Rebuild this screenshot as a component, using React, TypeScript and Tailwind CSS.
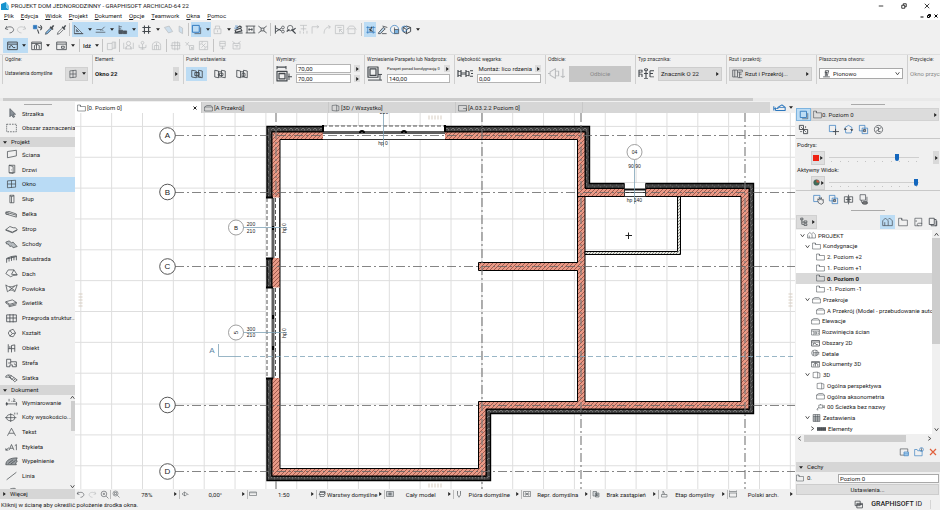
import React from "react";

const icons: Record<string, React.ReactNode> = {
  undo: <path d="M4 3 2 7l4 1M2 7c3-4 11-4 12 1 0 3-3 5-6 5" />,
  redo: <path d="m12 3 2 4-4 1M14 7C11 3 3 3 2 8c0 3 3 5 6 5" />,
  pick: <><path fill="#2f78bd" stroke="#2f78bd" d="M2 2h5v5H2z" /><path d="m8 8 2 6M12 2c3 2 3 5 0 7M9 4l4 2" strokeWidth="1.5" /></>,
  pipette: <><path strokeWidth="2.4" d="m9 4 4 4M11 6l3-4" /><path fill="#7cb3e0" d="M9 6 3 12l-1 3 3-1 6-6z" /></>,
  syringe: <><path strokeWidth="2.2" d="m9 4 4 4M11 6l3-4" /><path d="m9 6-6 6-1 3 3-1 6-6" /></>,
  triangle: <path d="M2 2v12h12zM5 8v3h3zM2 14h13" />,
  guide: <path d="M1 12h14M2 8h7M8 10l6-6M10 8l2 2" />,
  snap: <><path d="M3 2v12M3 4h4M3 7h3" /><path fill="#4a5661" d="M3 9h5v5H3zM9 10h5v4H9z" /></>,
  hash: <path strokeWidth="1.6" d="M5 2v12M11 2v12M2 5h12M2 11h12" />,
  plane: <path fill="#9cc6ea" d="M2 5 9 3l5 8-6 2z" />,
  planev: <path fill="#9cc6ea" d="M6 3l5 3v8l-5-3z" />,
  square: <><path stroke="#2f78bd" strokeWidth="1.4" d="M2 2h10v10H2z" /><path d="M5 14h9V5" /></>,
  lock: <path d="M3 7h10v7H3zM5 7V3h6v4M8 9v3" />,
  trace: <><path strokeWidth="1.6" d="M2 13h12M3 9l8-3 2 4-9 2zM5 6l5-3 3 2" /><path stroke="#2f78bd" d="M3 3h4M2 6h5" /></>,
  dim: <path strokeWidth="1.2" d="M1 3h14M1 13h14M3 3v10M13 3v10M6 6v4M10 6v4M5 8h6" />,
  cross: <path strokeWidth="1.2" d="m2 3 4 3M14 3l-4 3M2 13l4-3M14 13l-4-3M6 6h4v4H6z" />,
  scissors: <><circle cx="13" cy="5" r="2" /><circle cx="13" cy="11" r="2" /><path strokeWidth="1.4" d="M2 2v12M11 6 3 11M11 10 3 6" /></>,
  key: <><circle cx="6" cy="6" r="4" /><path strokeWidth="1.8" d="m8 8 6 6M10 9l4-3M1 11l4-3" /></>,
  split: <path d="M3 2h10M8 2v8M4 7h8M3 14v-4M8 14v-3M13 14v-4" />,
  corner: <path d="M3 14V4h9M10 2l3 2-3 2" />,
  curve: <path d="M3 14C3 7 7 4 12 4M9 2l3 2-2 3" />,
  resize: <path d="M2 2h12v12H2zM5 5h6M8 8l5 5M8 12V8h4" />,
  door: <path d="M3 7h10v7H3zM1 8l4-5h6l4 5" />,
  marquee: <><path stroke="#2f78bd" d="M4 3v11M12 3v11M2 5h13M2 12h13" /><path strokeWidth="1.6" d="m6 7 5 4M10 4l-3 7" /></>,
  pencil: <path strokeWidth="1.2" fill="#b9d2e6" d="m2 13 7-8 3 2-7 7H2zM8 3l7 2M7 14h7" />,
  globe: <><circle cx="8" cy="8" r="6" stroke="#2f78bd" /><path fill="#7cb3e0" d="M8 8h6v6H8z" /><path d="M8 5v4" /></>,
  cube: <><path strokeWidth="1.4" d="m8 3 6 2v6l-6 3-5-3V5zM3 5l5 3 6-3M8 8v6" /><circle cx="5" cy="7" r="4" stroke="#2f78bd" /></>,
  planwin: <path strokeWidth="1.4" d="M1 3h14v11H1zM1 6h14M4 12V9l3-1 2 3h3" />,
  cubewin: <path strokeWidth="1.2" d="M1 3h14v11H1zM1 5h14M5 13V8l3-2 4 2v5M8 6v7" />,
  sheetwin: <path strokeWidth="1.2" d="M1 3h14v11H1zM1 6h14M8 9h4v3H8z" />,
  copy: <path d="M2 5h7v9H2zM9 5V3h5v9H9M12 3v9" />,
  people: <><circle cx="8" cy="5" r="3" /><path d="M3 13c0-6 10-6 10 0zM1 4v9M15 4v9M5 10v3M11 10v3" /></>,
  person: <><circle cx="8" cy="4" r="2" /><path d="M8 6v8M3 7v4h10V7M5 13h6" /></>,
  arch: <path d="M2 14V8c0-7 12-7 12 0v6H2M5 14V8h6v6M8 4v10" />,
  grid: <path d="M3 4h11v9H3zM7 2v13M11 2v13M1 8h14" />,
  percent: <path d="m2 3 6 6M3 8l4-5M8 8h6v6H8zM10 10l3 3M13 10l-3 3" />,
  cage: <path d="M2 2h12v12H2zM5 5l6 6M11 5l-6 6M2 6h3M11 10h3M6 2v3M10 11v3" />,
  stamp: <path d="M4 2h8v7H4zM4 5h8M8 9v5M5 12h6" />,
  camera: <path d="M3 5h10v8H3zM2 2l4 3M14 2l-4 3M5 8h6M7 10h3" />,
  window: <path d="M3 3 13 2v11L3 14zM8 2v12M3 8h10" />,
  anchorL: <path strokeWidth="1.1" d="M1 3l6 1v9l-6-1zM7 6h3M7 12h6M10 3l5 1v9l-5-1zM5 6h6v4H5zM8 7v2" />,
  anchorC: <path strokeWidth="1.1" d="M1 3l5 1v9l-5-1zM6 5h4M6 12h4M10 3l5 1v9l-5-1zM7 7h5v3H7zM5 9h3" />,
  anchorR: <path strokeWidth="1.1" d="M1 3l5 1v9l-5-1zM6 5h4M6 12h4M10 3l5 1v9l-5-1zM8 7h4v4H8z" />,
  size: <><path strokeWidth="1.2" d="M1 6h10v9H1zM3 8h6v5H3z" /><path d="M1 1v3M10 1v3M1 2h9M13 8v6M12 11h4" /></>,
  sill: <><path strokeWidth="1.2" d="M1 1h10v11H1zM3 3h6v7H3z" /><path d="M1 15h14M13 9v6M11 9h4" /></>,
  reveal: <path strokeWidth="1.2" d="M1 3v10M4 3v10M1 5h3M1 11h3M4 7h5M4 9h5M9 3v10M12 5v7M9 5h3M9 11h3M13 4h3M14 8h2M13 12h3" />,
  flip: <path d="M0 8h2M2 6l5-4v12l-5-4zM7 5h3v6H7M14 2v11M12 11l2 2 2-2" />,
  marker: <path strokeWidth="1.1" d="M1 3h3v3H1zM1 13V6M1 9h3v4M8 4v11M6 8h4M6 15h4M8 1a1.5 1.5 0 1 0 .1 0M12 4h4M12 8h3M12 13h4M12 4v9" />,
  section: <path d="M1 3h7v10H1zM4 3v10M8 6h6M11 6v8M8 14h7M9 3h6v3M11 9h3" />,
  vertical: <path strokeWidth="1.4" d="M2 14h12M6 13V3h6l-3 10M8 5v7M5 6h5" />,
  folder: <path d="M1 2h5v3h9v9H1zM6 2v3" />,
  house: <path d="M1 14V7l4-4 4 4v7zM9 5l2-2 4 4v7H9M4 14V9" />,
  case: <path d="M1 6h14v8H1zM1 6l4-3h7l3 3" />,
  box3d: <path d="M2 3l8-1v12l-8-1zM10 3l4 1v9l-4 1" />,
  sheet: <path d="M1 3h14v11H1zM9 9h6v5" />,
  homeblue: <path stroke="#2f78bd" d="M1 12V5M3 12h12V7l-4-4-5 4h9M3 7v5M1 9h5V7" strokeWidth="1.3" />,
  arrow: <path fill="#8b9299" stroke="#50575e" d="M6 1v13l2-3 2 4 2-1-2-4h3z" />,
  area: <path strokeDasharray="2 1.3" d="M2 2h12v12H2z" />,
  wall: <path d="M3 4 14 2v9L3 14z" />,
  drzwi: <><path d="M5 2h7v12H5zM5 2l5 2v11l-5-1" /><path d="M8 9v1" /></>,
  column: <path d="M6 2h5v12H6zM6 3l2 1 3-1M8 4v10" />,
  beam: <path d="M1 5v3l13 5v-3zM1 5l4-1 9 4v2M1 8l4 0" />,
  slab: <path d="M1 9l5-5 4 2h3l2 3-6 4zM1 9v1l8 4 6-4" />,
  stairs: <path fill="#b7bcc0" d="M1 5l4-2 3 3 2-1 2 3 3 4-5 2-2-3-2 1-2-4H2z" />,
  rail: <path strokeWidth="1.1" d="M2 14V7l6-3 6-1v7M5 12V6M8 11V4M11 10V4M2 8l12-4" />,
  roof: <path d="M1 9l3-6h7l4 8-5 1-3 2zM11 3l-3 7 7 1" />,
  shell: <path d="M1 3c4 5 9 3 14 0l-3 11c-4-4-6-3-9 0zM5 6l7 6M12 5l-7 7" />,
  skylight: <path d="M1 6l8-3 5 4-8 3zM1 6v2l5 4 8-3V7M5 11v3l9-3" />,
  curtain: <path d="M2 3h12v11H2zM6 2v13M10 2v13M2 8h12" strokeWidth="1.1" />,
  morph: <path d="M6 4l4-2 3 6-3 6-4-1-2-5zM6 4l3 5-3 4M9 9l4-1" />,
  object: <path d="M4 2v7h4V4l4-1v11M4 9v6M8 9v6M8 9h4M6 5v4" strokeWidth="1.1" />,
  zone: <path strokeWidth="1.1" d="M2 2h5v4h7v8H9v-3H6v3H2zM7 6v3M11 9l3 3M4 8h3" />,
  mesh: <path d="M1 5c5-5 8 1 14 6l-3 3C8 9 5 5 1 7zM4 3l4 7M8 4l-2 4M11 7l-3 4M13 9l-3 3" />,
  dimline: <path d="M1 11h14M2 8v6M14 8v6M5 3v4M8 7h1M10 3c3 0 2 2 0 4h3M1 11l2-1v2z" />,
  level: <><circle cx="7" cy="9" r="5" /><path d="M7 2v14M0 9h14M12 1v3M15 1v3" /></>,
  text: <path d="M3 14 8 2l5 12M5 10h6" />,
  label: <path d="M1 13l4-4M1 10v3h3M5 13l3-9 3 9M6 10h4M12 6l2-2v9" />,
  fill: <path fill="#9a9fa3" d="M1 14c0-8 6-11 14-11l-1 3 1 3-2 2 1 3zM4 12l6-6M7 13l6-6" />,
  line: <path d="M2 14 14 2" />,
  arc: <path d="M3 13C3 5 8 3 13 4" />,
  zoom: <><circle cx="7" cy="7" r="5" /><path d="m11 11 4 4M5 7h4M7 5v4" /></>,
  zoomall: <><circle cx="7" cy="7" r="5" /><path d="m11 11 4 4M5 5h4v4H5z" /></>,
  rotate: <path d="M2 8l5-4 6 4-5 4zM7 4v8M13 8l2 2" />,
  ruler: <path d="M1 4h14v7H1zM4 4v3M8 4v3M12 4v3" />,
  layers: <path strokeWidth="1.3" d="M4 5h10L12 9H2zM4 9v4H12l2-4M4 5V3h10v6" />,
  model: <path fill="#c9cccf" d="M1 3h14v10H1zM4 6l8 4M4 10l8-4M8 3v10" />,
  pen: <path strokeWidth="1.3" d="M5 2v7c0 5 6 5 6 0V2M8 13v2" />,
  repr: <path d="M1 3h14v10H1zM4 5l8 6M12 5l-8 6M3 8h10" />,
  override: <path d="M2 3h7v9H2zM7 6h7v8H7zM9 8h3v3H9z" fill="#cfd3d6" />,
  phase: <path d="M3 14V9h3V2l4 7h4v5zM6 9h4" />,
  std: <path d="M1 6h14v8H1zM2 3h12M1 1v4M15 1v4" />,
  swap: <><path d="M2 2h6v6H2zM8 8h6v6H8z" strokeWidth="1.3" /><path d="M11 3v3M3 11h3M4 4l8 8" /></>,
  move: <><path stroke="#2f78bd" d="M2 2h9v9H2z" /><path strokeWidth="1.3" d="M11 7v9M7 11h9" /></>,
  spin: <><path stroke="#2f78bd" d="M3 5l5-3 5 3-1 8H4z" /><path fill="#444" d="m2 8 1-2 2 2zM11 8l2 2 1-2z" /></>,
  copies: <><path stroke="#2f78bd" d="M2 2h8v8H2zM6 6h8v8H6z" /><path fill="#99a5af" d="M8 8h3v3H8z" /></>,
  reset: <><circle cx="8" cy="8" r="6" /><path d="m4 11 8-6M5 5h3v3M11 11H8V9" strokeWidth="1.1" /></>,
  hand: <><path stroke="#2f78bd" d="M1 2h9v9H1z" /><path fill="#eee" d="M7 10V7l2 2V5l2 3 1-3 1 4 2-1v5l-3 2-4-2z" /></>,
  mirror: <path d="M2 4h5v8H2zM9 4h5v8H9zM8 1v14M4 8h8" strokeWidth="1.1" />,
  layer3: <><path d="M3 1h8v8H3zM5 9v3h8V4" /><ellipse cx="10" cy="13" rx="4" ry="2" fill="#777" /></>,
  treeicon: <path strokeWidth="1.3" d="M3 2h4v3H3zM5 5v8h4M5 9h4M9 7h5v3H9zM9 12h5v3H9z" />,
  page: <path d="M3 2h11v9M3 2v12h6M9 14c-3 0-3-4 0-4h5v4H9M5 8V5" />,
  pages: <path d="M2 2h8v10H2zM5 12v2h8V4h-3M12 14h2V6" strokeWidth="1.3" />,
  interior: <path d="M1 3h14v11H1zM1 6h14M5 6v8M7 8h3v4H7zM12 8h2M12 11h2" />,
  detail: <><circle cx="7" cy="8" r="6" /><path d="M4 3v10M9 2v12M4 7h11M4 10h11" /></>,
  cam: <path d="M5 4h7v6H5zM12 7l3-2v5l-3-2M1 13l4-4M3 11v4M8 4V2" />,
  table: <><path fill="#cfd2d4" d="M2 1h12v14H2z" /><path d="M2 5h12M2 8h12M2 12h12M6 1v14M10 1v14" /></>,
  elems: <path fill="#55595c" d="M0 5h16v6H0zM4 5v6M8 5v6M12 5v6" />,
  saveview: <><path d="M2 3h12v10H2z" /><path stroke="#2f78bd" fill="#bcdcf5" d="M8 8h7v6H8zM8 11h7" /></>,
  newfolder: <><path stroke="#2f78bd" d="M1 4h4l1 2h7v8H1z" /><circle cx="12" cy="4" r="3" stroke="#2f78bd" /><path d="M12 2v4" /></>,
  del: <path stroke="#e0603c" strokeWidth="2.4" d="m2 2 12 12M14 2 2 14" />,
  winstack: <path strokeWidth="1.4" d="M2 2h9v8H2zM5 6h10v8H5zM5 8h10" />,
  circle4: <><circle cx="8" cy="8" r="6.5" fill="#3f6f5a" /><path fill="#d8543a" stroke="none" d="M8 8V2a6 6 0 0 1 6 6z" /></>,
};

function Ico({ n, c = "size-[11px]", off = false }: { n: string; c?: string; off?: boolean }) {
  return (
    <svg viewBox="0 0 16 16" preserveAspectRatio="none" fill="none" strokeWidth="1" strokeLinejoin="round" className={`${c} shrink-0 ${off ? "stroke-[#6b7075] opacity-40" : "stroke-[#43484d]"}`} aria-hidden="true">
      {icons[n]}
    </svg>
  );
}

const Down = () => (
  <svg viewBox="0 0 6 4" className="h-[3px] w-1 shrink-0 fill-[#222]" aria-hidden="true"><path d="M0 0h6L3 4z" /></svg>
);
const Right = () => (
  <svg viewBox="0 0 4 6" className="h-1 w-[3px] shrink-0 fill-[#222]" aria-hidden="true"><path d="M0 0v6l4-3z" /></svg>
);
const Chev = ({ open = true }: { open?: boolean }) => (
  <svg viewBox="0 0 8 8" fill="none" className="size-[5px] shrink-0 stroke-[#333] stroke-[1.3]" aria-hidden="true"><path d={open ? "m1 2 3 4 3-4" : "m2 1 4 3-4 3"} /></svg>
);

function Tool({ n, off, menu, tight }: { n: string; off?: boolean; menu?: boolean; tight?: boolean }) {
  const width = tight ? "w-5 justify-between pr-px" : menu ? "w-[22px] justify-between pl-px pr-[2px]" : "w-3 justify-center";
  return (
    <button aria-label={n} className={`flex h-full shrink-0 items-center ${width}`}>
      <Ico n={n} off={off} />
      {(menu || tight) && <Down />}
    </button>
  );
}
const Sep = () => <span className="mx-[2px] h-[13px] w-px shrink-0 bg-[#c4c4c4]" />;

function Header() {
  return (
    <header className="shrink-0 bg-white">
      <div className="flex h-[11px] items-center justify-between pl-px pr-[10px]">
        <div className="flex items-center gap-[2px]">
          <svg viewBox="0 0 8 8" className="size-2" aria-hidden="true"><path fill="#1593cf" d="M0 8V2l5-2v5l3 3z" /><path fill="#76c7ea" d="M5 0v5l3 3V4z" /></svg>
          <h1 className="text-[6px]">PROJEKT DOM JEDNORODZINNY - GRAPHISOFT ARCHICAD-64 22</h1>
        </div>
        <div className="flex gap-[17px]">
          {["M1 4h6", "M1 3h4v4H1zM3 3V1h4v4H5", "m1 1 6 6M7 1 1 7"].map((d, i) => (
            <button key={d} aria-label={["Minimalizuj", "Przywróć", "Zamknij"][i]}><svg viewBox="0 0 8 8" fill="none" className="size-[6px] stroke-black"><path d={d} /></svg></button>
          ))}
        </div>
      </div>
      <nav className="flex h-[9px] items-center gap-[7px] pl-1 pr-[2px] text-[6px]">
        {["Plik", "Edycja", "Widok", "Projekt", "Dokument", "Opcje", "Teamwork", "Okna", "Pomoc"].map((m) => (
          <button key={m} className="leading-[9px]"><span className="underline">{m[0]}</span>{m.slice(1)}</button>
        ))}
        <span className="grow" />
        <div className="flex gap-[3px]">
          {["M1 6h6", "M1 3h4v4H1zM3 3V1h4v4H5", "m1 1 6 6M7 1 1 7"].map((d, i) => (
            <button key={d} aria-label={["Minimalizuj okno", "Przywróć okno", "Zamknij okno"][i]}><svg viewBox="0 0 8 8" fill="none" className="size-1 stroke-black stroke-2"><path d={d} /></svg></button>
          ))}
        </div>
      </nav>
    </header>
  );
}

function Toolbars() {
  return (
    <div className="shrink-0 bg-[#f0f0f0]">
      <div className="flex h-[18px] items-center px-[3px] py-px">
        <Tool n="undo" /><Tool n="redo" off /><span className="w-1" />
        <Tool n="pick" /><Tool n="pipette" /><Tool n="syringe" /><Sep />
        <div className="flex h-[15px] bg-[#bcdcf4]"><Tool n="triangle" menu /><Tool n="guide" menu /><Tool n="snap" menu /></div>
        <span className="w-[2px]" /><Tool n="hash" menu /><Tool n="plane" off /><Tool n="planev" off /><Sep />
        <div className="flex h-[15px] bg-[#bcdcf4]"><Tool n="square" tight /></div>
        <span className="w-px" /><Tool n="lock" off tight /><Tool n="trace" /><Tool n="dim" /><Tool n="cross" /><Sep />
        <Tool n="scissors" /><Tool n="key" /><Tool n="split" off /><Tool n="corner" off /><Tool n="curve" off /><Tool n="resize" off /><Tool n="door" off /><span className="w-[2px]" /><Sep />
        <div className="flex h-[15px] bg-[#bcdcf4]"><Tool n="marquee" /></div>
        <Tool n="pencil" /><Tool n="globe" /><Tool n="cube" menu />
      </div>
      <div className="flex h-4 items-center px-[3px] pb-px">
        <div className="mr-[2px] flex h-full bg-[#bcdcf4] pl-[3px]"><Tool n="planwin" menu /></div>
        <Tool n="cubewin" menu /><span className="w-[3px]" /><Tool n="sheetwin" menu /><Sep />
        <button className="flex h-full items-center gap-1 px-px text-[6px] font-medium">Idź<Down /></button><Sep />
        <Tool n="copy" off /><Sep />
        <Tool n="people" off /><span className="w-[2px]" /><Tool n="person" off /><span className="w-[2px]" /><Tool n="arch" off /><span className="w-[2px]" /><Sep />
        <Tool n="grid" off /><span className="w-[2px]" /><Tool n="percent" off /><span className="w-[2px]" /><Tool n="cage" off /><span className="w-[2px]" /><Sep />
        <Tool n="stamp" off /><span className="w-[2px]" /><Tool n="camera" off />
      </div>
    </div>
  );
}

function Panel({ title, children }: { title: string; children: React.ReactNode }) {
  return (
    <section className="h-[29px] w-[90px] shrink-0 border-l border-[#cfcfcf] pl-[2px] pr-1 even:w-[91px]">
      <h2 className="h-2 whitespace-nowrap text-[5px] leading-[8px] text-[#333]">{title}</h2>
      <div className="flex h-[21px] items-center gap-1">{children}</div>
    </section>
  );
}
const Step = () => <button aria-label="Więcej opcji" className="flex h-[7px] w-[6px] shrink-0 items-center justify-center bg-[#dcdcdc]"><Right /></button>;
const field = "h-[9px] min-w-0 grow border border-[#b4b4b4] bg-white px-px text-[6px] leading-[8px]";

function InfoBox() {
  return (
    <div className="h-12 shrink-0 overflow-hidden border-t border-[#dedede] bg-[#f0f0f0]">
      <div className="flex pl-[2px]">
        <Panel title="Ogólne:">
          <span className="w-0 grow whitespace-nowrap text-[5px]">Ustawienia domyślne</span>
          <button aria-label="Typ okna" className="flex h-[14px] w-[23px] items-center justify-center gap-1 border border-[#d0d0d0] bg-[#dcdcdc]"><Ico n="window" c="size-[10px]" /><Down /></button>
        </Panel>
        <Panel title="Element:">
          <b className="grow text-[6px]">Okno 22</b>
          <button aria-label="Wybierz element" className="flex h-[14px] w-[6px] items-center justify-center bg-[#d8d8d8]"><Right /></button>
        </Panel>
        <Panel title="Punkt wstawienia:">
          <button aria-label="Krawędź 1" className="flex h-[14px] w-[21px] items-center justify-center bg-[#bcdcf4]"><Ico n="anchorL" c="size-3" /></button>
          <button aria-label="Środek" className="w-[18px]"><Ico n="anchorC" c="mx-auto size-3" /></button>
          <button aria-label="Krawędź 2" className="w-[18px]"><Ico n="anchorR" c="mx-auto size-3" /></button>
        </Panel>
        <Panel title="Wymiary:">
          <Ico n="size" c="w-4 h-[17px]" />
          <div className="flex min-w-0 grow flex-col gap-px">
            <div className="flex items-center gap-[3px]"><input aria-label="Szerokość" defaultValue="70,00" className={field} /><Step /></div>
            <div className="flex items-center gap-[3px]"><input aria-label="Wysokość" defaultValue="70,00" className={field} /><Step /></div>
          </div>
        </Panel>
        <Panel title="Wzniesienie Parapetu lub Nadproża:">
          <Ico n="sill" c="w-4 h-[15px]" />
          <div className="flex min-w-0 grow flex-col gap-px">
            <div className="flex items-center justify-between whitespace-nowrap text-[4px] leading-[9px]"><label htmlFor="sill">Parapet ponad kondygnację 0</label><Step /></div>
            <input id="sill" defaultValue="140,00" className={field + " shrink-0"} />
          </div>
        </Panel>
        <Panel title="Głębokość węgarka:">
          <Ico n="reveal" c="w-4 h-[11px]" />
          <div className="flex min-w-0 grow flex-col gap-px">
            <div className="flex items-center justify-end gap-[3px] whitespace-nowrap text-[6px] leading-[9px]"><label htmlFor="reveal">Montaż: lico rdzenia</label><Step /></div>
            <input id="reveal" defaultValue="0,00" className={field + " shrink-0"} />
          </div>
        </Panel>
        <Panel title="Odbicie:">
          <Ico n="flip" c="w-[17px] h-[13px]" off />
          <button disabled className="h-4 grow bg-[#c6c6c6] text-[6px] text-[#8a8a8a]">Odbicie</button>
        </Panel>
        <Panel title="Typ znacznika:">
          <Ico n="marker" c="w-[16px] h-[11px]" />
          <button className="flex h-[14px] grow items-center justify-between border border-[#cdcdcd] bg-[#dcdcdc] px-[2px] text-[6px]">Znacznik O 22<Right /></button>
        </Panel>
        <Panel title="Rzut i przekrój:">
          <button className="flex h-[14px] grow items-center gap-[2px] border border-[#cdcdcd] bg-[#dcdcdc] px-[2px] text-[6px]"><Ico n="section" /><span className="grow text-left">Rzut i Przekrój...</span><Right /></button>
        </Panel>
        <Panel title="Płaszczyzna otworu:">
          <div className="flex h-[11px] grow items-center border border-[#a9a9a9] bg-white px-[2px]">
            <Ico n="vertical" c="size-[9px]" />
            <select aria-label="Płaszczyzna otworu" className="grow appearance-none bg-transparent pl-[2px] text-[6px] leading-[8px]"><option>Pionowo</option></select>
            <Chev />
          </div>
        </Panel>
        <Panel title="Przycięcie:"><span className="whitespace-nowrap text-[6px] text-[#888]">Okno przycięte</span></Panel>
      </div>
      <div className="mt-[14px] h-[3px] bg-[#e9e9e9] pl-[3px]"><div className="h-full w-4/5 bg-[#cbcbcb]" /></div>
    </div>
  );
}

const projectTools = [["wall", "Ściana"], ["drzwi", "Drzwi"], ["window", "Okno"], ["column", "Słup"], ["beam", "Belka"], ["slab", "Strop"], ["stairs", "Schody"], ["rail", "Balustrada"], ["roof", "Dach"], ["shell", "Powłoka"], ["skylight", "Świetlik"], ["curtain", "Przegroda struktur..."], ["morph", "Kształt"], ["object", "Obiekt"], ["zone", "Strefa"], ["mesh", "Siatka"]];
const docTools = [["dimline", "Wymiarowanie"], ["level", "Koty wysokościo..."], ["text", "Tekst"], ["label", "Etykieta"], ["fill", "Wypełnienie"], ["line", "Linia"], ["arc", ""]];

const ToolRow = ({ n, t }: { n: string; t: string }) => (
  <button aria-label={t || n} className={`flex min-h-0 w-full flex-1 items-center gap-1 whitespace-nowrap pl-[5px] text-left text-[6px] ${t === "Okno" ? "bg-[#b9dbf5]" : ""}`}>
    <Ico n={n} c="w-[13px] h-[10px]" />{t}
  </button>
);
const Bar = ({ t, closed }: { t: string; closed?: boolean }) => (
  <h3 className="flex h-[10px] shrink-0 items-center gap-1 bg-[#d6d6d6] pl-[3px] text-[6px]">{closed ? <Right /> : <Down />}{t}</h3>
);

function Toolbox() {
  return (
    <aside className="flex w-[75px] shrink-0 flex-col bg-[#f0f0f0]">
      <div className="mx-auto mt-[2px] h-px w-7 shrink-0 bg-[#aaa]" />
      <div className="mt-px mb-[2px] flex h-[29px] shrink-0 flex-col"><ToolRow n="arrow" t="Strzałka" /><ToolRow n="area" t="Obszar zaznaczenia" /></div>
      <Bar t="Projekt" />
      <div className="flex min-h-0 flex-1 flex-col">{projectTools.map(([n, t]) => <ToolRow key={n} n={n} t={t} />)}</div>
      <Bar t="Dokument" />
      <div className="flex h-[94px] shrink-0 overflow-hidden">
        <div className="flex h-[103px] min-w-0 grow flex-col">{docTools.map(([n, t]) => <ToolRow key={n} n={n} t={t} />)}</div>
        <div className="flex w-[5px] flex-col items-center"><span className="rotate-180"><Chev /></span><div className="mt-px h-[30px] w-1 bg-[#cdcdcd]" /><span className="grow" /><Chev /></div>
      </div>
      <Bar t="Więcej" closed />
    </aside>
  );
}

const steps = (start: number, end: number) => {
  const out: number[] = [];
  for (let v = start; v < end; v += 30.85) out.push(v);
  return out;
};
const mid = "M272 132H585V188.5H749V409H486V476H272Z";

function Plan() {
  return (
    <svg viewBox="75 113 720 376" preserveAspectRatio="xMidYMid slice" className="block size-full bg-white" fontFamily="Liberation Sans, Arial, sans-serif" role="img" aria-label="Rzut parteru">
      <defs>
        <pattern id="brick" width="4" height="4" patternUnits="userSpaceOnUse"><rect width="4" height="4" fill="#e99a87" /><path d="M-1 5 5-1M-1 1l2-2M3 5l2-2" stroke="#8e4a3e" strokeWidth=".8" /></pattern>
        <pattern id="insul" width="6" height="6" patternUnits="userSpaceOnUse"><rect width="6" height="6" fill="#444" /><path d="M1 4l2-2 2 2M0 1h1M4 5h1" stroke="#8c8c8c" strokeWidth=".7" fill="none" /></pattern>
        <pattern id="light" width="3" height="3" patternUnits="userSpaceOnUse"><rect width="3" height="3" fill="#e4e6df" /><path d="M0 3 3 0" stroke="#444" strokeWidth=".6" /></pattern>
      </defs>
      <g stroke="#dedede" strokeWidth="1">
        {steps(80.8, 795).map((x) => <path key={x} d={`M${x} 113V489`} />)}
        {steps(126.4, 489).map((y) => <path key={y} d={`M75 ${y}H795`} />)}
      </g>
      <g stroke="#000" strokeWidth="1">
        <path fill="url(#insul)" fillRule="evenodd" d={`M267 126.5H589.5V183.5H753.5V413.5H490.5V480.5H267Z ${mid}`} strokeWidth="1.4" />
        <path fill="url(#brick)" fillRule="evenodd" d={`${mid} M280 139.5H577.5V262.5H478.5V270.5H577.5V401.5H478.5V468.5H280Z M585 196.5H741V401.5H585Z`} />
        <path fill="url(#light)" d="M677.5 196.5H680.5V254.5H585V251.5H677.5Z" />
        <path d="M577.5 196.5H585" />
      </g>
      <path fill="#fff" d="M323 125.5H445V139H323ZM266 197.5H279.5V258H266ZM266 287.5H279.5V378H266ZM624.5 182.5H645.5V196H624.5Z" />
      <g stroke="#333" strokeWidth="1" fill="none">
        <path d="M323 126H445M267 198V258M267 288V378M275.5 198V258M275.5 288V378" strokeDasharray="4 2" stroke="#555" />
        <path d="M323 139.5H445M279.5 198V258M279.5 288V378" />
        <path d="M323 132.5H445M273 198V258M273 288V378" stroke="#5e5e5e" strokeWidth="3" />
        <path d="M624.5 183.5V196.5H645.5V183.5M624.5 192.5H645.5" />
        <path d="M624.5 189.5H645.5" stroke="#111" strokeWidth="2" />
        <path d="M323 125V132M445 125V132M266 197.5H273M266 258.5H273M266 287.5H273M266 378.5H273" stroke="#000" strokeWidth="2" />
        <path d="M360 133a2 2 0 0 1 4 0M402 133a2 2 0 0 1 4 0M273 226v4M273 315v4M273 346v4" stroke="#000" strokeWidth="2" />
      </g>
      <g stroke="#666" strokeWidth=".8" strokeDasharray="9 3 2 3" fill="none">
        {[135.5, 192.5, 266.5, 405.5, 471.5].map((y) => <path key={y} d={`M175 ${y}H795`} />)}
        <path d="M276 113V196M276 481V489M482 113V489M581 113V489M745 113V489" strokeWidth="1.1" stroke="#777" />
      </g>
      <g fill="#fff" stroke="#444" strokeWidth=".9">
        {[[135.5, "A"], [192, "B"], [266.5, "C"], [405, "D"], [471.5, "D"]].map(([y, t]) => (
          <g key={y}><circle cx="167.5" cy={y} r="7.8" /><text x="167.5" y={Number(y) + 2.6} fontSize="8" textAnchor="middle" fill="#222" stroke="none">{t}</text></g>
        ))}
      </g>
      <g stroke="#7fa3b8" strokeWidth=".8" fill="none">
        <path d="M383.5 113V147M243 227.5H287M243 332.5H287M634.5 160V204" />
        <path d="M218.5 344V356.5H236" /><path d="M236 356.5H795" strokeDasharray="5 3" />
      </g>
      <g fill="#fff" stroke="#888" strokeWidth=".8"><circle cx="236" cy="227.5" r="7.5" /><circle cx="236" cy="332.5" r="7.5" /><circle cx="634.5" cy="152" r="7.5" /></g>
      <g fontSize="5" fill="#222" textAnchor="middle">
        <text x="236" y="229.5" fontSize="6">B</text>
        <text transform="translate(238 332.5) rotate(-90)" fontSize="6">5</text>
        <text x="634.5" y="154">04</text>
        <text x="251" y="226">200</text><text x="251" y="233">210</text>
        <text x="251" y="331">300</text><text x="251" y="337">210</text>
        <text x="634.5" y="168">90 90</text>
        <text x="383" y="145">hp 0</text><text x="384" y="114">210</text>
        <text x="634.5" y="202">hp 140</text>
        <text transform="translate(286 228) rotate(-90)">hp 0</text><text transform="translate(286 333) rotate(-90)">hp 0</text>
        <text x="212" y="353" fontSize="8" fill="#5c86a6">A</text>
      </g>
      <path d="M625.5 235.5H632M628.5 232.5V239" stroke="#222" fill="none" />
      <path d="M428 117.5H442M428 485.5H442M80.5 293V308M790.5 293V308" stroke="#d9cfc2" strokeDasharray="2 1" strokeWidth="4" opacity=".5" />
    </svg>
  );
}

const quick = [["zoomall", "78%"], ["rotate", "0,00°"], ["ruler", "1:50"], ["layers", "Warstwy domyślne"], ["model", "Cały model"], ["pen", "Pióra domyślne"], ["repr", "Repr. domyślna"], ["override", "Brak zastąpień"], ["phase", "Etap domyślny"], ["std", "Polski arch."]];

function Workspace() {
  return (
    <main className="flex min-w-0 grow flex-col">
      <div className="flex h-[11px] shrink-0 bg-[#d6d6d6] text-[6px]">
        {[["folder", "[0. Poziom 0]"], ["case", "[A Przekrój]"], ["box3d", "[3D / Wszystko]"], ["sheet", "[A.03.2.2 Poziom 0]"]].map(([n, t], i) => (
          <button key={t} className={`flex w-[127px] items-center gap-px border-r border-[#c8c8c8] pl-[2px] ${i === 0 ? "bg-white" : ""}`}>
            <Ico n={n} c="w-[9px] h-[8px]" /><span className="grow text-left">{t}</span>
            {i === 0 && <svg viewBox="0 0 8 8" className="mr-1 size-1 stroke-[#222] stroke-2"><path d="m1 1 6 6M7 1 1 7" /></svg>}
          </button>
        ))}
        <span className="grow" />
        <button aria-label="Widok" className="flex w-[25px] items-center justify-end gap-[3px] bg-[#efefef] pr-[2px]"><Ico n="homeblue" c="w-[13px] h-[10px]" /><Down /></button>
      </div>
      <div className="min-h-0 flex-1"><Plan /></div>
      <div className="flex h-[10px] shrink-0 items-center bg-[#f0f0f0] text-[6px] leading-[9px]">
        <div className="flex w-[35px] shrink-0 items-center justify-around"><Ico n="undo" c="size-[9px]" /><Ico n="redo" c="size-[9px]" off /><Ico n="zoom" c="size-[9px]" /></div>
        {quick.map(([n, t]) => (
          <button key={t} className="flex min-w-0 flex-1 items-center whitespace-nowrap border-l border-[#bbb] pl-px pr-[2px]"><Ico n={n} c="size-[8px]" /><span className="min-w-0 grow text-center">{t}</span><Right /></button>
        ))}
      </div>
    </main>
  );
}

const tree: [string, string, string, string][] = [
  ["pl-1", "o", "house", "PROJEKT"], ["pl-[9px]", "o", "folder", "Kondygnacje"],
  ["pl-[20px]", "", "folder", "2. Poziom +2"], ["pl-[20px]", "", "folder", "1. Poziom +1"], ["pl-[20px]", "", "folder", "0. Poziom 0"], ["pl-[20px]", "", "folder", "-1. Poziom -1"],
  ["pl-[9px]", "o", "case", "Przekroje"], ["pl-[20px]", "", "case", "A Przekrój (Model - przebudowanie automatyczne)"],
  ["pl-[15px]", "", "case", "Elewacje"], ["pl-[15px]", "", "interior", "Rozwinięcia ścian"], ["pl-[15px]", "", "planwin", "Obszary 2D"], ["pl-[15px]", "", "detail", "Detale"], ["pl-[15px]", "", "cubewin", "Dokumenty 3D"],
  ["pl-[9px]", "o", "box3d", "3D"], ["pl-[20px]", "", "box3d", "Ogólna perspektywa"], ["pl-[20px]", "", "case", "Ogólna aksonometria"], ["pl-[20px]", "", "cam", "00 Ścieżka bez nazwy"],
  ["pl-[9px]", "o", "table", "Zestawienia"], ["pl-[14px]", "c", "elems", "Elementy"],
];

function Slider({ label, v }: { label: string; v: number }) {
  return (
    <div className="flex w-[90px] flex-col">
      <input type="range" aria-label={label} defaultValue={v} className="h-[7px] w-full appearance-none bg-transparent [&::-webkit-slider-runnable-track]:h-px [&::-webkit-slider-runnable-track]:bg-[#cfcfcf] [&::-webkit-slider-thumb]:-mt-[3px] [&::-webkit-slider-thumb]:h-[7px] [&::-webkit-slider-thumb]:w-1 [&::-webkit-slider-thumb]:appearance-none [&::-webkit-slider-thumb]:rounded-b-sm [&::-webkit-slider-thumb]:bg-[#1467bd]" />
      <div className="flex justify-between px-[2px]">{Array.from({ length: 11 }, (_, i) => <i key={i} className="h-px w-px bg-[#c4c4c4]" />)}</div>
    </div>
  );
}

function Navigator() {
  return (
    <aside className="flex w-[145px] shrink-0 flex-col bg-[#f0f0f0] pl-px text-[6px]">
      <div className="mx-auto mt-[2px] h-px w-[34px] shrink-0 bg-[#aaa]" />
      <div className="mt-[3px] flex h-[13px] shrink-0 pr-px">
        <button aria-label="Podrys i odniesienie" className="flex w-[15px] items-center justify-center border border-[#7db4e0] bg-[#bcdcf4]"><Ico n="square" c="size-[10px]" /></button>
        <button className="flex grow items-center border border-[#d2d2d2] bg-[#dcdcdc] px-px"><Ico n="folder" c="size-[9px]" /><span className="grow text-left">0. Poziom 0</span><Right /></button>
      </div>
      <div className="flex h-[18px] shrink-0 items-center gap-1 border-b border-[#c8c8c8] pl-[2px]">
        <Ico n="swap" /><span className="w-[11px]" /><Ico n="move" /><Ico n="spin" /><Ico n="copies" /><Ico n="reset" />
      </div>
      <p className="mt-px h-[10px] shrink-0 pl-px leading-[10px]">Podrys:</p>
      <div className="flex h-[15px] shrink-0 items-center pl-[15px] pr-px">
        <button aria-label="Kolor podrysu" className="mr-1 flex h-[14px] w-[14px] items-center justify-center gap-px border border-[#cfcfcf] bg-[#dfdfdf]"><i className="size-[6px] bg-[#ee2212]" /><Right /></button>
        <Slider label="Podrys" v={77} /><span className="grow" />
        <button aria-label="Opcje podrysu" className="flex h-[13px] w-[6px] items-center justify-center bg-[#d9d9d9]"><Right /></button>
      </div>
      <p className="h-[10px] shrink-0 pl-px leading-[10px]">Aktywny Widok:</p>
      <div className="flex h-[15px] shrink-0 items-center pl-[15px]">
        <button aria-label="Kolor widoku" className="mr-1 flex h-[14px] w-[14px] items-center justify-center gap-px border border-[#cfcfcf] bg-[#dfdfdf]"><Ico n="circle4" c="size-[7px]" /><Right /></button>
        <Slider label="Aktywny widok" v={99} />
      </div>
      <div className="flex h-[18px] shrink-0 items-center gap-1 border-t border-[#c8c8c8] pl-[17px]">
        <Ico n="hand" /><Ico n="copies" /><Ico n="mirror" /><Ico n="layer3" />
      </div>
      <div className="mx-auto mt-[2px] h-px w-[34px] shrink-0 bg-[#aaa]" />
      <div className="mt-[3px] flex h-[15px] shrink-0 items-center">
        <button aria-label="Wybór projektu" className="flex h-[14px] w-[21px] items-center justify-center gap-1 border border-[#d0d0d0] bg-[#dcdcdc]"><Ico n="treeicon" c="size-[9px]" /><Right /></button>
        <span className="grow" />
        <button aria-label="Mapa projektu" className="flex h-[14px] w-[15px] items-center justify-center bg-[#bcdcf4]"><Ico n="house" /></button>
        {["folder", "page", "pages"].map((n) => <button key={n} aria-label={n} className="flex w-[15px] justify-center"><Ico n={n} c="size-[10px]" /></button>)}
      </div>
      <div className="mt-px flex min-h-0 flex-1 bg-white">
        <div className="flex min-w-0 grow flex-col">
          {tree.map(([pad, st, n, t]) => (
            <div key={t} className={`flex min-h-0 flex-1 items-center gap-[2px] overflow-hidden whitespace-nowrap ${pad} ${t === "0. Poziom 0" ? "bg-[#d9d9d9] font-bold" : ""}`}>
              {st && <Chev open={st === "o"} />}<Ico n={n} c="w-[9px] h-[8px]" />{t}
            </div>
          ))}
        </div>
        <div className="flex w-2 shrink-0 flex-col items-center bg-[#f0f0f0] py-[2px]"><span className="rotate-180"><Chev /></span><div className="my-px h-[106px] w-full bg-[#cdcdcd]" /><span className="grow" /><Chev /></div>
      </div>
      <div className="flex h-2 shrink-0 items-center gap-[2px] px-px"><span className="rotate-90"><Chev /></span><div className="h-[7px] w-[102px] bg-[#cdcdcd]" /><span className="grow" /><span className="mr-[7px]"><Chev open={false} /></span></div>
      <div className="flex h-5 shrink-0 items-center justify-end gap-[5px] pr-[3px]"><Ico n="saveview" c="size-[10px]" /><Ico n="newfolder" c="size-[10px]" /><Ico n="del" c="size-[8px]" /></div>
      <Bar t="Cechy" />
      <div className="mt-px flex h-[10px] shrink-0 items-center gap-[3px] pr-px">
        <Ico n="folder" c="size-[8px]" /><label htmlFor="story" className="w-[28px]">0.</label>
        <input id="story" defaultValue="Poziom 0" className="h-[9px] min-w-0 grow border border-[#a9a9a9] bg-white px-px" />
      </div>
      <button className="mr-px mt-px mb-[4px] h-[11px] shrink-0 border border-[#cdcdcd] bg-[#dedede] leading-[9px]">Ustawienia...</button>
    </aside>
  );
}

export default function App() {
  return (
    <div className="flex h-screen flex-col overflow-hidden bg-[#f0f0f0] font-['Roboto','Noto_Sans',sans-serif] leading-tight text-[#1c1c1c]">
      <Header />
      <Toolbars />
      <InfoBox />
      <div className="flex min-h-0 flex-1"><Toolbox /><Workspace /><Navigator /></div>
      <footer className="flex h-[11px] shrink-0 items-center bg-[#f0f0f0] pl-px pr-[9px] text-[6px]">
        <span className="grow">Kliknij w ścianę aby określić położenie środka okna.</span>
        <Ico n="winstack" c="size-[9px]" />
        <span className="ml-2 border-r border-[#d5d5d5] pr-2 text-[7px]"><b className="font-medium">GRAPHISOFT</b> ID</span>
      </footer>
    </div>
  );
}
